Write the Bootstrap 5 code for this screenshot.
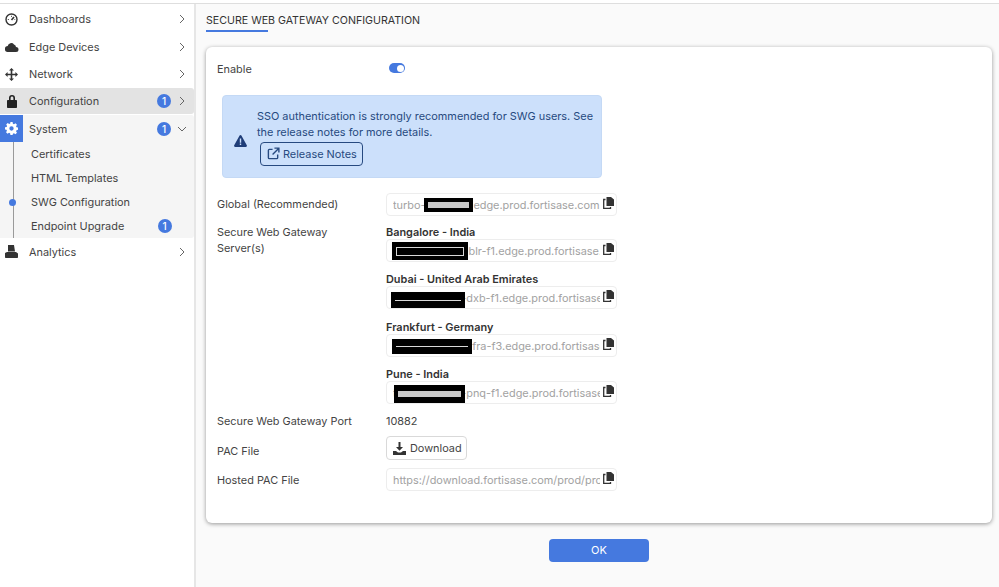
<!DOCTYPE html>
<html lang="en">
<head>
<meta charset="utf-8">
<title>Secure Web Gateway Configuration</title>
<link rel="stylesheet" href="https://cdn.jsdelivr.net/npm/bootstrap@5.3.0/dist/css/bootstrap.min.css">
<style>
html,body{height:100%;overflow:hidden}
body{font-family:Inter,"Liberation Sans",sans-serif;font-size:10.9px;color:#444;background:#fff}
.shell{height:584px;margin-top:3px;border-top:1px solid #dedede;background:#fafafa}
.side{width:196px;flex:none;background:#fff;border-right:2px solid #e6e6e6;padding-top:1.5px}
.mitem{height:27.5px;padding-right:6px;color:#444}
.mitem .ico{width:23px;height:100%;flex:none;margin-right:6px}
.mitem .lbl{flex:1}
.mcur{background:#e3e3e3;border-radius:0 3px 3px 0;height:26px;margin-bottom:1px}
.subgroup{background:#f5f5f5;border-radius:0 3px 3px 0;position:relative}
.sysrow{height:27px}
.sysrow .lbl{padding-top:2px}
.sysico{background:#4579df;color:#fff}
.subitem{height:24px;padding-left:31px;padding-right:6px;position:relative}
.subitem .lbl{flex:1}
.rail{position:absolute;left:12.5px;top:27px;bottom:0;width:1px;background:#9a9a9a}
.dot{position:absolute;left:9px;top:8.5px;width:7px;height:7px;border-radius:50%;background:#4579df}
.cnt{width:14px;height:14px;border-radius:50%;background:#4579df;color:#fff;font-size:10px;line-height:14px;text-align:center;margin-right:5px;flex:none;font-weight:500}
.chev{width:12px;flex:none;color:#666}
.cntgap{margin-right:16.5px}
.pane{flex:1;min-width:0;padding:0 7px 0 10px}
.ttl{font-size:10.65px;color:#333;height:28px;padding-top:10px;line-height:14px;position:relative;margin-bottom:15px}
.ttl:after{content:"";position:absolute;left:0;bottom:0;width:62px;height:2px;background:#4579df}
.panel{height:476px;background:#fff;border-radius:6px;box-shadow:0 1px 4px rgba(0,0,0,.4);padding:10px 11px 11px}
.fr{display:flex}
.fl{width:169px;flex:none;line-height:16px}
.tog{width:16px;height:10px;border-radius:5px;background:#4579df;position:relative;margin:6px 0 0 3px}
.tog:after{content:"";position:absolute;right:1px;top:1.5px;width:7px;height:7px;border-radius:50%;background:#fff}
.note{margin:18px 0 15px 5px;width:380px;height:83px;background:#cce0fb;border-radius:4px;border:1px solid #c4d9f5;color:#274a80;padding:0 8px 0 11px;line-height:16px}
.note p{margin:0}
.notext{margin-left:10px}
.relbtn{display:inline-flex;align-items:center;gap:3px;height:24px;padding:0 5px 0 6px;border:1px solid #274a80;border-radius:4px;color:#274a80;background:transparent;margin-left:3px;margin-top:2px}
.cp{width:231px;height:23px;position:relative}
.cp input{display:block;width:100%;height:100%;border:1px solid #ededed;border-radius:4px;background:#fff;padding:0 16px 0 6px;color:#a2a2a2;font:inherit;outline:0}
.cp .cpy{position:absolute;right:3px;top:4px}
.mask{position:absolute;background:#000;display:flex;align-items:center;padding:0 4px}
.mask i{display:block;width:100%;height:1px;background:#d8d8d8}
.mask .boxed{height:9px;background:transparent;border:1px solid #d8d8d8}
.mask .thick{height:6px;background:#c8c8c8}
.site{font-weight:600;color:#333;line-height:14px;height:14px}
.dl{display:inline-flex;align-items:center;gap:4px;height:24px;padding:0 4px 0 6px;border:1px solid #d9d9d9;border-radius:4px;background:#fff;color:#444}
.okb{width:100px;height:23px;background:#4579df;border:0;border-radius:4px;color:#fff;font-size:11px;margin:16px 0 0 343px;display:block}
</style>
</head>
<body>
<div class="shell d-flex">
  <nav class="side">
    <div class="mitem d-flex align-items-center">
      <span class="ico d-flex align-items-center justify-content-center"><svg width="13" height="13" viewBox="0 0 13 13" fill="none" stroke="#333" stroke-width="1.4"><circle cx="6.5" cy="6.5" r="5.5"/><path d="M6.5 7L9 4" stroke-width="1.6"/><path d="M2.8 6.5h1M6.5 2.8v1M9.5 6.5h.7" stroke-width="1"/></svg></span>
      <span class="lbl">Dashboards</span>
      <svg class="chev" height="10" viewBox="0 0 12 10" fill="none" stroke="currentColor"><path d="M4 1l4 4-4 4"/></svg>
    </div>
    <div class="mitem d-flex align-items-center">
      <span class="ico d-flex align-items-center justify-content-center"><svg width="14" height="10" viewBox="0 0 14 10" fill="#333"><path d="M3 10A3 3 0 0 1 2.700 4 3.600 3.600 0 0 1 9 2.400 2.800 2.800 0 0 1 11 5a2.500 2.500 0 0 1 0 5z"/></svg></span>
      <span class="lbl">Edge Devices</span>
      <svg class="chev" height="10" viewBox="0 0 12 10" fill="none" stroke="currentColor"><path d="M4 1l4 4-4 4"/></svg>
    </div>
    <div class="mitem d-flex align-items-center">
      <span class="ico d-flex align-items-center justify-content-center"><svg width="13" height="13" viewBox="0 0 13 13" fill="#333"><path d="M6.500 0L9 2.600H7.300v3.100h3.100V4L13 6.500 10.400 9V7.300H7.300v3.100H9L6.500 13 4 10.400h1.700V7.300H2.600V9L0 6.500 2.600 4v1.700h3.100V2.600H4z"/></svg></span>
      <span class="lbl">Network</span>
      <svg class="chev" height="10" viewBox="0 0 12 10" fill="none" stroke="currentColor"><path d="M4 1l4 4-4 4"/></svg>
    </div>
    <div class="mitem mcur d-flex align-items-center">
      <span class="ico d-flex align-items-center justify-content-center"><svg width="12" height="14" viewBox="0 0 12 14" fill="#222"><path d="M3 6V4a3 3 0 0 1 6 0v2h1.200c.5 0 .8.400.8.800v6.400c0 .5-.3.800-.8.800H1.800c-.5 0-.8-.3-.8-.8V6.800c0-.4.3-.8.8-.8zm1.600 0h2.800V4a1.400 1.400 0 0 0-2.800 0z"/></svg></span>
      <span class="lbl">Configuration</span>
      <span class="cnt">1</span>
      <svg class="chev" height="10" viewBox="0 0 12 10" fill="none" stroke="currentColor"><path d="M4 1l4 4-4 4"/></svg>
    </div>
    <div class="subgroup">
      <div class="rail"></div>
      <div class="mitem sysrow d-flex align-items-center">
        <span class="ico sysico d-flex align-items-center justify-content-center"><svg width="13" height="13" viewBox="0 0 24 24" fill="#fff"><path fill-rule="evenodd" d="M10 0h4l.6 3.100 2 .9L19.300 2.300l2.800 2.800-1.700 2.700.9 2 3.100.6v4l-3.100.6-.9 2 1.700 2.700-2.800 2.800-2.700-1.700-2 .9L14 24h-4l-.6-3.100-2-.9-2.700 1.700-2.800-2.800 1.700-2.700-.9-2L-.1 13.900v-4l3.100-.6.900-2L2.200 4.600 5 1.800l2.700 1.700 2-.9zM12 8a4 4 0 1 0 0 8 4 4 0 0 0 0-8z"/></svg></span>
        <span class="lbl">System</span>
        <span class="cnt">1</span>
        <svg class="chev" height="10" viewBox="0 0 12 10" fill="none" stroke="currentColor"><path d="M2 3l4 4 4-4"/></svg>
      </div>
      <div class="subitem d-flex align-items-center"><span class="lbl">Certificates</span></div>
      <div class="subitem d-flex align-items-center"><span class="lbl">HTML Templates</span></div>
      <div class="subitem d-flex align-items-center"><span class="dot"></span><span class="lbl">SWG Configuration</span></div>
      <div class="subitem d-flex align-items-center"><span class="lbl">Endpoint Upgrade</span><span class="cnt cntgap">1</span></div>
    </div>
    <div class="mitem d-flex align-items-center">
      <span class="ico d-flex align-items-center justify-content-center"><svg width="13" height="13" viewBox="0 0 13 13" fill="#333"><path d="M3 0h6l1 6.500H3z"/><path d="M0 8l2-1h9l2 1.500V12c0 .6-.4 1-1 1H1c-.6 0-1-.4-1-1z"/></svg></span>
      <span class="lbl">Analytics</span>
      <svg class="chev" height="10" viewBox="0 0 12 10" fill="none" stroke="currentColor"><path d="M4 1l4 4-4 4"/></svg>
    </div>
  </nav>
  <main class="pane">
    <div class="ttl">SECURE WEB GATEWAY CONFIGURATION</div>
    <section class="panel">
      <div class="fr"><div class="fl mt-1">Enable</div><div class="tog"></div></div>
      <div class="note d-flex align-items-center">
        <svg width="13" height="12" viewBox="0 0 13 12" class="flex-shrink-0 mt-2"><path d="M6.500 0c.4 0 .7.200.9.500l5.400 9.800c.4.700-.1 1.700-.9 1.700H1.100c-.8 0-1.300-1-.9-1.700L5.600.5C5.800.2 6.100 0 6.500 0z" fill="#1f3d78"/><path d="M5.800 3.500h1.400v4.200H5.800zM5.800 8.600h1.400V10H5.800z" fill="#cce0fb"/></svg>
        <div class="notext">
          <p>SSO authentication is strongly recommended for SWG users. See the release notes for more details.</p>
          <span class="relbtn"><svg width="13" height="13" viewBox="0 0 14 14" fill="none" stroke="#274a80" stroke-width="1.500"><path d="M6 2.500H2.500a1 1 0 0 0-1 1v8a1 1 0 0 0 1 1h8a1 1 0 0 0 1-1V8"/><path d="M8 1.200h4.800V6M12.500 1.500L6 8"/></svg>Release Notes</span>
        </div>
      </div>
      <div class="fr" style="margin-bottom:8px;height:23px">
        <div class="fl" style="padding-top:3px">Global (Recommended)</div>
        <div class="cp"><input readonly value="turbo-xxxxxxxr.edge.prod.fortisase.com" aria-label="Global"><span class="mask" style="left:38px;top:5px;width:49px;height:14px"><i class="thick"></i></span><svg class="cpy" width="11" height="12" viewBox="0 0 11 12"><path d="M3.500 0H8l3 2.500V9H3.500z" fill="#333"/><path d="M2.500 2.500H.7v9h6.800V10" fill="none" stroke="#333" stroke-width="1.300"/></svg></div>
      </div>
      <div class="fr">
        <div class="fl">Secure Web Gateway<br>Server(s)</div>
        <div>
          <div class="site" style="margin-top:1px">Bangalore - India</div>
          <div class="cp"><input readonly value="turbo-xxxxxxi-blr-f1.edge.prod.fortisase.com" aria-label="Bangalore"><span class="mask" style="left:6px;top:3px;width:76px;height:18px"><i class="boxed"></i></span><svg class="cpy" width="11" height="12" viewBox="0 0 11 12"><path d="M3.500 0H8l3 2.500V9H3.500z" fill="#333"/><path d="M2.500 2.500H.7v9h6.800V10" fill="none" stroke="#333" stroke-width="1.300"/></svg></div>
          <div class="site" style="margin-top:10px">Dubai - United Arab Emirates</div>
          <div class="cp"><input readonly value="turbo-xxxxxir-dxb-f1.edge.prod.fortisase.com" aria-label="Dubai"><span class="mask" style="left:5px;top:6px;width:74px;height:16px"><i></i></span><svg class="cpy" width="11" height="12" viewBox="0 0 11 12"><path d="M3.500 0H8l3 2.500V9H3.500z" fill="#333"/><path d="M2.500 2.500H.7v9h6.800V10" fill="none" stroke="#333" stroke-width="1.300"/></svg></div>
          <div class="site" style="margin-top:11px">Frankfurt - Germany</div>
          <div class="cp"><input readonly value="turbo-xxxxxxir-fra-f3.edge.prod.fortisase.com" aria-label="Frankfurt"><span class="mask" style="left:6px;top:5px;width:80px;height:15px"><i></i></span><svg class="cpy" width="11" height="12" viewBox="0 0 11 12"><path d="M3.500 0H8l3 2.500V9H3.500z" fill="#333"/><path d="M2.500 2.500H.7v9h6.800V10" fill="none" stroke="#333" stroke-width="1.300"/></svg></div>
          <div class="site" style="margin-top:10px">Pune - India</div>
          <div class="cp"><input readonly value="turbo-xxxxrrr-pnq-f1.edge.prod.fortisase.com" aria-label="Pune"><span class="mask" style="left:8px;top:4px;width:71px;height:18px"><i class="thick"></i></span><svg class="cpy" width="11" height="12" viewBox="0 0 11 12"><path d="M3.500 0H8l3 2.500V9H3.500z" fill="#333"/><path d="M2.500 2.500H.7v9h6.800V10" fill="none" stroke="#333" stroke-width="1.300"/></svg></div>
        </div>
      </div>
      <div class="fr" style="margin-top:9px"><div class="fl">Secure Web Gateway Port</div><div>10882</div></div>
      <div class="fr" style="margin-top:7px"><div class="fl" style="padding-top:7px">PAC File</div><span class="dl"><svg width="13" height="13" viewBox="0 0 13 13" fill="#333"><path d="M5.500 0h2v5H10L6.500 8.700 3 5h2.500z"/><path d="M0 9h3l2 1.500h3L10 9h3v4H0z"/></svg>Download</span></div>
      <div class="fr" style="margin-top:8px"><div class="fl" style="padding-top:4px">Hosted PAC File</div><div class="cp"><input readonly value="https://download.fortisase.com/prod/proxy/config.pac" aria-label="Hosted PAC File"><svg class="cpy" width="11" height="12" viewBox="0 0 11 12"><path d="M3.500 0H8l3 2.500V9H3.500z" fill="#333"/><path d="M2.500 2.500H.7v9h6.800V10" fill="none" stroke="#333" stroke-width="1.300"/></svg></div></div>
    </section>
    <button class="okb" type="button">OK</button>
  </main>
</div>
</body>
</html>
